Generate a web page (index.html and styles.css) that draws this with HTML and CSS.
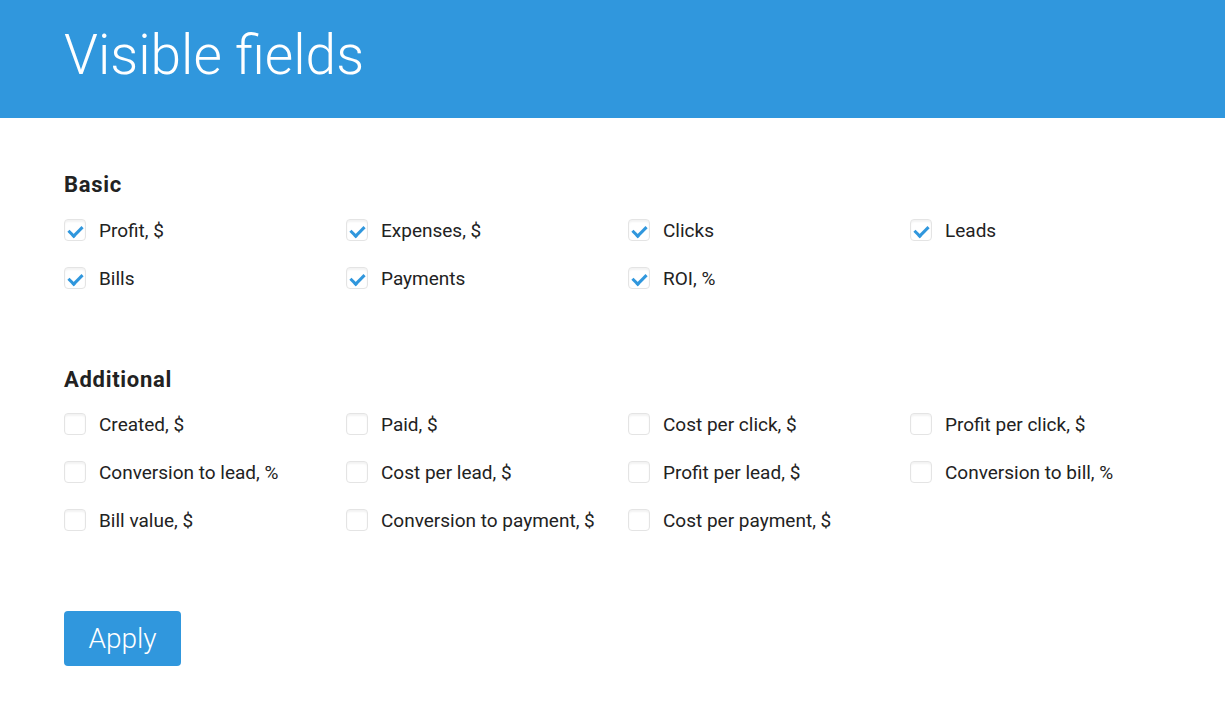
FILE: index.html
```html
<!DOCTYPE html>
<html lang="en">
<head>
  <meta charset="UTF-8">
  <title>Visible fields</title>
  <link rel="stylesheet" href="styles.css">
</head>
<body>
  <div class="header">
    <h1 class="title">Visible fields</h1>
  </div>

  <div class="content">
    <div class="group">
      <h2 class="group-title">Basic</h2>
      <div class="fields">
        <label class="field"><input type="checkbox" checked><span class="box"></span>Profit, $</label>
        <label class="field"><input type="checkbox" checked><span class="box"></span>Expenses, $</label>
        <label class="field"><input type="checkbox" checked><span class="box"></span>Clicks</label>
        <label class="field"><input type="checkbox" checked><span class="box"></span>Leads</label>
        <label class="field"><input type="checkbox" checked><span class="box"></span>Bills</label>
        <label class="field"><input type="checkbox" checked><span class="box"></span>Payments</label>
        <label class="field"><input type="checkbox" checked><span class="box"></span>ROI, %</label>
      </div>
    </div>

    <div class="group group-extra">
      <h2 class="group-title">Additional</h2>
      <div class="fields">
        <label class="field"><input type="checkbox"><span class="box"></span>Created, $</label>
        <label class="field"><input type="checkbox"><span class="box"></span>Paid, $</label>
        <label class="field"><input type="checkbox"><span class="box"></span>Cost per click, $</label>
        <label class="field"><input type="checkbox"><span class="box"></span>Profit per click, $</label>
        <label class="field"><input type="checkbox"><span class="box"></span>Conversion to lead, %</label>
        <label class="field"><input type="checkbox"><span class="box"></span>Cost per lead, $</label>
        <label class="field"><input type="checkbox"><span class="box"></span>Profit per lead, $</label>
        <label class="field"><input type="checkbox"><span class="box"></span>Conversion to bill, %</label>
        <label class="field"><input type="checkbox"><span class="box"></span>Bill value, $</label>
        <label class="field"><input type="checkbox"><span class="box"></span>Conversion to payment, $</label>
        <label class="field"><input type="checkbox"><span class="box"></span>Cost per payment, $</label>
      </div>
    </div>

    <button class="apply">Apply</button>
  </div>
</body>
</html>
```

FILE: styles.css
```css
body {
  margin: 0;
  font-family: Roboto, "Liberation Sans", sans-serif;
  color: #222;
  background: #fff;
}

.header {
  height: 118px;
  box-sizing: border-box;
  background-color: #3097dd;
  display: flex;
  align-items: center;
  padding: 0 64px 8px;
}

.title {
  margin: 0;
  font-size: 55px;
  font-weight: 300;
  color: #fff;
}

.content {
  padding: 55px 64px 0;
}

.group-title {
  margin: 0;
  font-size: 22px;
  line-height: 24px;
  font-weight: 700;
  letter-spacing: 0.7px;
}

.group-extra {
  margin-top: 66px;
}

.fields {
  display: grid;
  grid-template-columns: repeat(4, 282px);
  grid-auto-rows: 48px;
  margin-top: 9px;
}

.group-extra .fields {
  margin-top: 8px;
}

.field {
  display: flex;
  align-items: center;
  gap: 13px;
  font-size: 19px;
  cursor: pointer;
}

.field input {
  display: none;
}

.box {
  width: 22px;
  height: 22px;
  box-sizing: border-box;
  border: 1px solid #e4e4e4;
  border-radius: 4px;
  box-shadow: inset 0 2px 2px rgba(0, 0, 0, 0.05);
  position: relative;
}

.field input:checked + .box::after {
  content: "";
  position: absolute;
  left: 6px;
  top: 3px;
  width: 6px;
  height: 11px;
  border: solid #3097dd;
  border-width: 0 3px 3px 0;
  transform: rotate(45deg);
}

.apply {
  margin-top: 67px;
  width: 117px;
  height: 55px;
  border: none;
  border-radius: 4px;
  background-color: #3097dd;
  color: #fff;
  font-family: Roboto, "Liberation Sans", sans-serif;
  font-size: 28px;
  font-weight: 300;
  cursor: pointer;
}
```
